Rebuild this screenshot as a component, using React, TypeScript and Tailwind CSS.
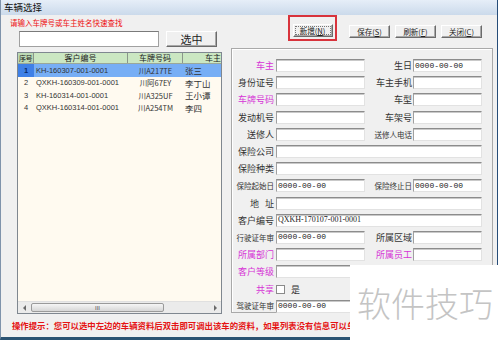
import React from "react";

const cjk = "font-['Noto_Sans_CJK_SC',sans-serif]";
const pink = "text-[#d633d6]";

interface Car {
    no: number
    code: string
    plate: string
    owner: string
}

const cars: Array<Car> = [
    { no: 1, code: "KH-160307-001-0001", plate: "川A217TE", owner: "张三" },
    { no: 2, code: "QXKH-160309-001-0001", plate: "川阿67EY", owner: "李丁山" },
    { no: 3, code: "KH-160314-001-0001", plate: "川A325UF", owner: "王小谭" },
    { no: 4, code: "QXKH-160314-001-0001", plate: "川A254TM", owner: "李四" },
]

function Btn({ children, className }: { children: React.ReactNode, className: string }) {
    return (
        <button className={`flex items-center justify-center bg-[#f0f0f0] border border-t-white border-l-white border-r-[#6b6b6b] border-b-[#6b6b6b] shadow-[inset_-1px_-1px_0_#a8a8a8] text-[#222] ${className}`}>
            {children}
        </button>
    )
}

function Box({ className, value, serif }: { className: string, value?: string, serif?: boolean }) {
    return (
        <div className={`h-[13px] shrink-0 bg-white border border-[#e2e2e2] border-t-[#8c8c8c] border-l-[#a0a0a0] shadow-[inset_0_1px_0_#c9c9c9] flex items-center pl-[1px] overflow-hidden whitespace-nowrap text-[#222] ${serif ? "font-['Liberation_Serif',serif] text-[8px]" : "font-['Liberation_Mono',monospace] text-[8px]"} ${className}`}>
            {value}
        </div>
    )
}

function LeftLab({ t, m, small }: { t: string, m?: boolean, small?: boolean }) {
    return (
        <span className={`w-[44px] pr-[2px] shrink-0 text-right whitespace-nowrap ${small ? 'text-[7.5px]' : 'text-[9px]'} ${m ? pink : 'text-[#333]'}`}>{t}</span>
    )
}

function RightLab({ t, m, small }: { t: string, m?: boolean, small?: boolean }) {
    return (
        <span className={`w-[48px] pr-[1px] shrink-0 text-right whitespace-nowrap ${small ? 'text-[7.5px]' : 'text-[9px]'} ${m ? pink : 'text-[#333]'}`}>{t}</span>
    )
}

function Row({ children }: { children: React.ReactNode }) {
    return <div className="flex items-center h-[17.2px]">{children}</div>
}

function Grid() {
    return (
        <div className="ml-[16px] mt-[5px] w-[205px] h-[262px] border border-[#7f8790] bg-[#fffaf0] flex flex-col overflow-hidden font-['Liberation_Sans',Arial,sans-serif]">
            <div className={`flex h-[11px] shrink-0 bg-[#cbe7c2] border-b border-[#9aa79a] text-[8px] leading-none text-[#222] ${cjk}`}>
                <div className="w-[16px] shrink-0 flex items-center justify-center border-r border-[#8a968a] bg-[#bcd9b4] text-[7px] tracking-[-0.5px]">序号</div>
                <div className="w-[94px] shrink-0 flex items-center justify-center border-r border-[#8a968a]">客户编号</div>
                <div className="w-[55px] shrink-0 flex items-center justify-center border-r border-[#8a968a]">车牌号码</div>
                <div className="w-[39px] shrink-0 flex items-center justify-end pr-[1px]">车主</div>
            </div>
            {cars.map((c, i) => (
                <div key={i} className={`flex h-[12.5px] shrink-0 text-[7.5px] leading-none text-[#333] ${i === 0 ? 'bg-[#77aef5]' : ''}`}>
                    <div className={`w-[16px] shrink-0 flex items-center justify-center ${i === 0 ? 'bg-[#3f80e6] text-[#0b2a66] font-bold' : ''}`}>{c.no}</div>
                    <div className="w-[94px] shrink-0 flex items-center pl-[2px] whitespace-nowrap">{c.code}</div>
                    <div className={`w-[55px] shrink-0 flex items-center justify-center whitespace-nowrap ${cjk}`}>{c.plate}</div>
                    <div className={`w-[39px] shrink-0 flex items-center pl-[2px] text-[8.5px] whitespace-nowrap ${cjk}`}>{c.owner}</div>
                </div>
            ))}
            <div className="flex-1" />
            <div className="h-[12px] shrink-0 bg-[#ebebeb] border-t border-[#e0e0e0] flex items-center">
                <div className="w-[12px] flex items-center justify-center">
                    <div className="w-0 h-0 border-y-[3px] border-y-transparent border-r-[3px] border-r-[#6a6a6a]" />
                </div>
                <div className="ml-[1px] w-[133px] h-[9px] rounded-[2px] border border-[#9a9a9a] bg-gradient-to-b from-[#f6f6f6] to-[#d6d6d6] flex items-center justify-center text-[6px] leading-none text-[#555]">III</div>
                <div className="flex-1" />
                <div className="w-[12px] flex items-center justify-center">
                    <div className="w-0 h-0 border-y-[3px] border-y-transparent border-l-[3px] border-l-[#6a6a6a]" />
                </div>
            </div>
        </div>
    )
}

function Form() {
    return (
        <div className="ml-[3px] mt-[7px] w-[262px] h-[265px] border border-[#a9a9a9] shadow-[inset_1px_1px_0_#ffffff] pt-[8px] leading-none">
            <Row>
                <LeftLab t="车主" m />
                <Box className="w-[89px]" />
                <RightLab t="生日" />
                <Box className="w-[69px]" value="0000-00-00" />
            </Row>
            <Row>
                <LeftLab t="身份证号" />
                <Box className="w-[89px]" />
                <RightLab t="车主手机" />
                <Box className="w-[69px]" />
            </Row>
            <Row>
                <LeftLab t="车牌号码" m />
                <Box className="w-[89px]" />
                <RightLab t="车型" />
                <Box className="w-[69px]" />
            </Row>
            <Row>
                <LeftLab t="发动机号" />
                <Box className="w-[89px]" />
                <RightLab t="车架号" />
                <Box className="w-[69px]" />
            </Row>
            <Row>
                <LeftLab t="送修人" />
                <Box className="w-[89px]" />
                <RightLab t="送修人电话" small />
                <Box className="w-[69px]" />
            </Row>
            <Row>
                <LeftLab t="保险公司" />
                <Box className="w-[206px]" />
            </Row>
            <Row>
                <LeftLab t="保险种类" />
                <Box className="w-[206px]" />
            </Row>
            <Row>
                <LeftLab t="保险起始日" small />
                <Box className="w-[89px]" value="0000-00-00" />
                <RightLab t="保险终止日" small />
                <Box className="w-[69px]" value="0000-00-00" />
            </Row>
            <Row>
                <LeftLab t={"地\u00a0\u00a0\u00a0址"} />
                <Box className="w-[206px]" />
            </Row>
            <Row>
                <LeftLab t="客户编号" />
                <Box className="w-[206px]" value="QXKH-170107-001-0001" serif />
            </Row>
            <Row>
                <LeftLab t="行驶证年审" small />
                <Box className="w-[89px]" value="0000-00-00" />
                <RightLab t="所属区域" />
                <Box className="w-[69px]" />
            </Row>
            <Row>
                <LeftLab t="所属部门" m />
                <Box className="w-[89px]" />
                <RightLab t="所属员工" m />
                <Box className="w-[69px]" />
            </Row>
            <Row>
                <LeftLab t="客户等级" m />
                <Box className="w-[206px]" />
            </Row>
            <Row>
                <LeftLab t="共享" m />
                <div className="w-[9px] h-[9px] bg-white border border-[#8a8a8a] shrink-0" />
                <span className="ml-[6px] text-[9px] text-[#333]">是</span>
            </Row>
            <Row>
                <LeftLab t="驾驶证年审" small />
                <Box className="w-[206px]" value="0000-00-00" />
            </Row>
        </div>
    )
}

export default function App() {
    return (
        <div className={`relative w-[500px] h-[340px] overflow-hidden bg-white ${cjk}`}>
            <div className="w-[498px] h-[340px] flex flex-col bg-[#f0f0f0] border-l border-l-[#7f93ab] border-r border-r-[#264c78] border-b-[3px] border-b-[#2b5372]">
                <div className="h-[15px] shrink-0 bg-gradient-to-b from-[#e6eef8] to-[#cbdaeb] flex items-center pl-[3px] text-[9.5px] leading-none text-[#111]">
                    车辆选择
                </div>
                <div className="h-[300px] shrink-0 flex">
                    <div className="w-[227px] shrink-0 flex flex-col">
                        <div className="pl-[9px] mt-[3px] h-[9px] flex items-center text-[7.5px] leading-none text-[#ee1111] whitespace-nowrap">
                            请输入车牌号或车主姓名快速查找
                        </div>
                        <div className="flex mt-[4px] h-[16px]">
                            <div className="ml-[18px] w-[140px] h-[16px] bg-white border border-[#a0a0a0] border-t-[#7a7a7a]" />
                            <Btn className="ml-[7px] w-[51px] h-[16px] text-[11px] leading-none">选中</Btn>
                        </div>
                        <Grid />
                    </div>
                    <div className="flex-1 flex flex-col">
                        <div className="flex items-end h-[26px] text-[7.5px] leading-none">
                            <div className="ml-[60px] w-[49px] h-[26px] border-2 border-[#d8333c] flex items-end justify-center pb-[2px]">
                                <Btn className="w-[40px] h-[13px] outline outline-1 outline-dotted outline-[#777] outline-offset-[-3px]">新增(<u>N</u>)</Btn>
                            </div>
                            <Btn className="ml-[12px] mb-[3px] w-[41px] h-[13px]">保存(<u>S</u>)</Btn>
                            <Btn className="ml-[5px] mb-[3px] w-[41px] h-[13px]">刷新(<u>F</u>)</Btn>
                            <Btn className="ml-[5px] mb-[3px] w-[41px] h-[13px]">关闭(<u>C</u>)</Btn>
                        </div>
                        <Form />
                    </div>
                </div>
                <div className="flex-1 flex items-center pl-[11px] pb-[2px] text-[8.4px] font-bold leading-none text-[#e51414] whitespace-nowrap overflow-hidden">
                    操作提示：您可以选中左边的车辆资料后双击即可调出该车的资料，如果列表没有信息可以单击新增按钮
                </div>
            </div>
            <div className="absolute left-[350px] top-[265px] w-[150px] h-[75px] bg-white flex items-center justify-center">
                <span className={`text-[34px] leading-none text-[#c4c4c4] font-light ${cjk}`}>软件技巧</span>
            </div>
        </div>
    )
}
